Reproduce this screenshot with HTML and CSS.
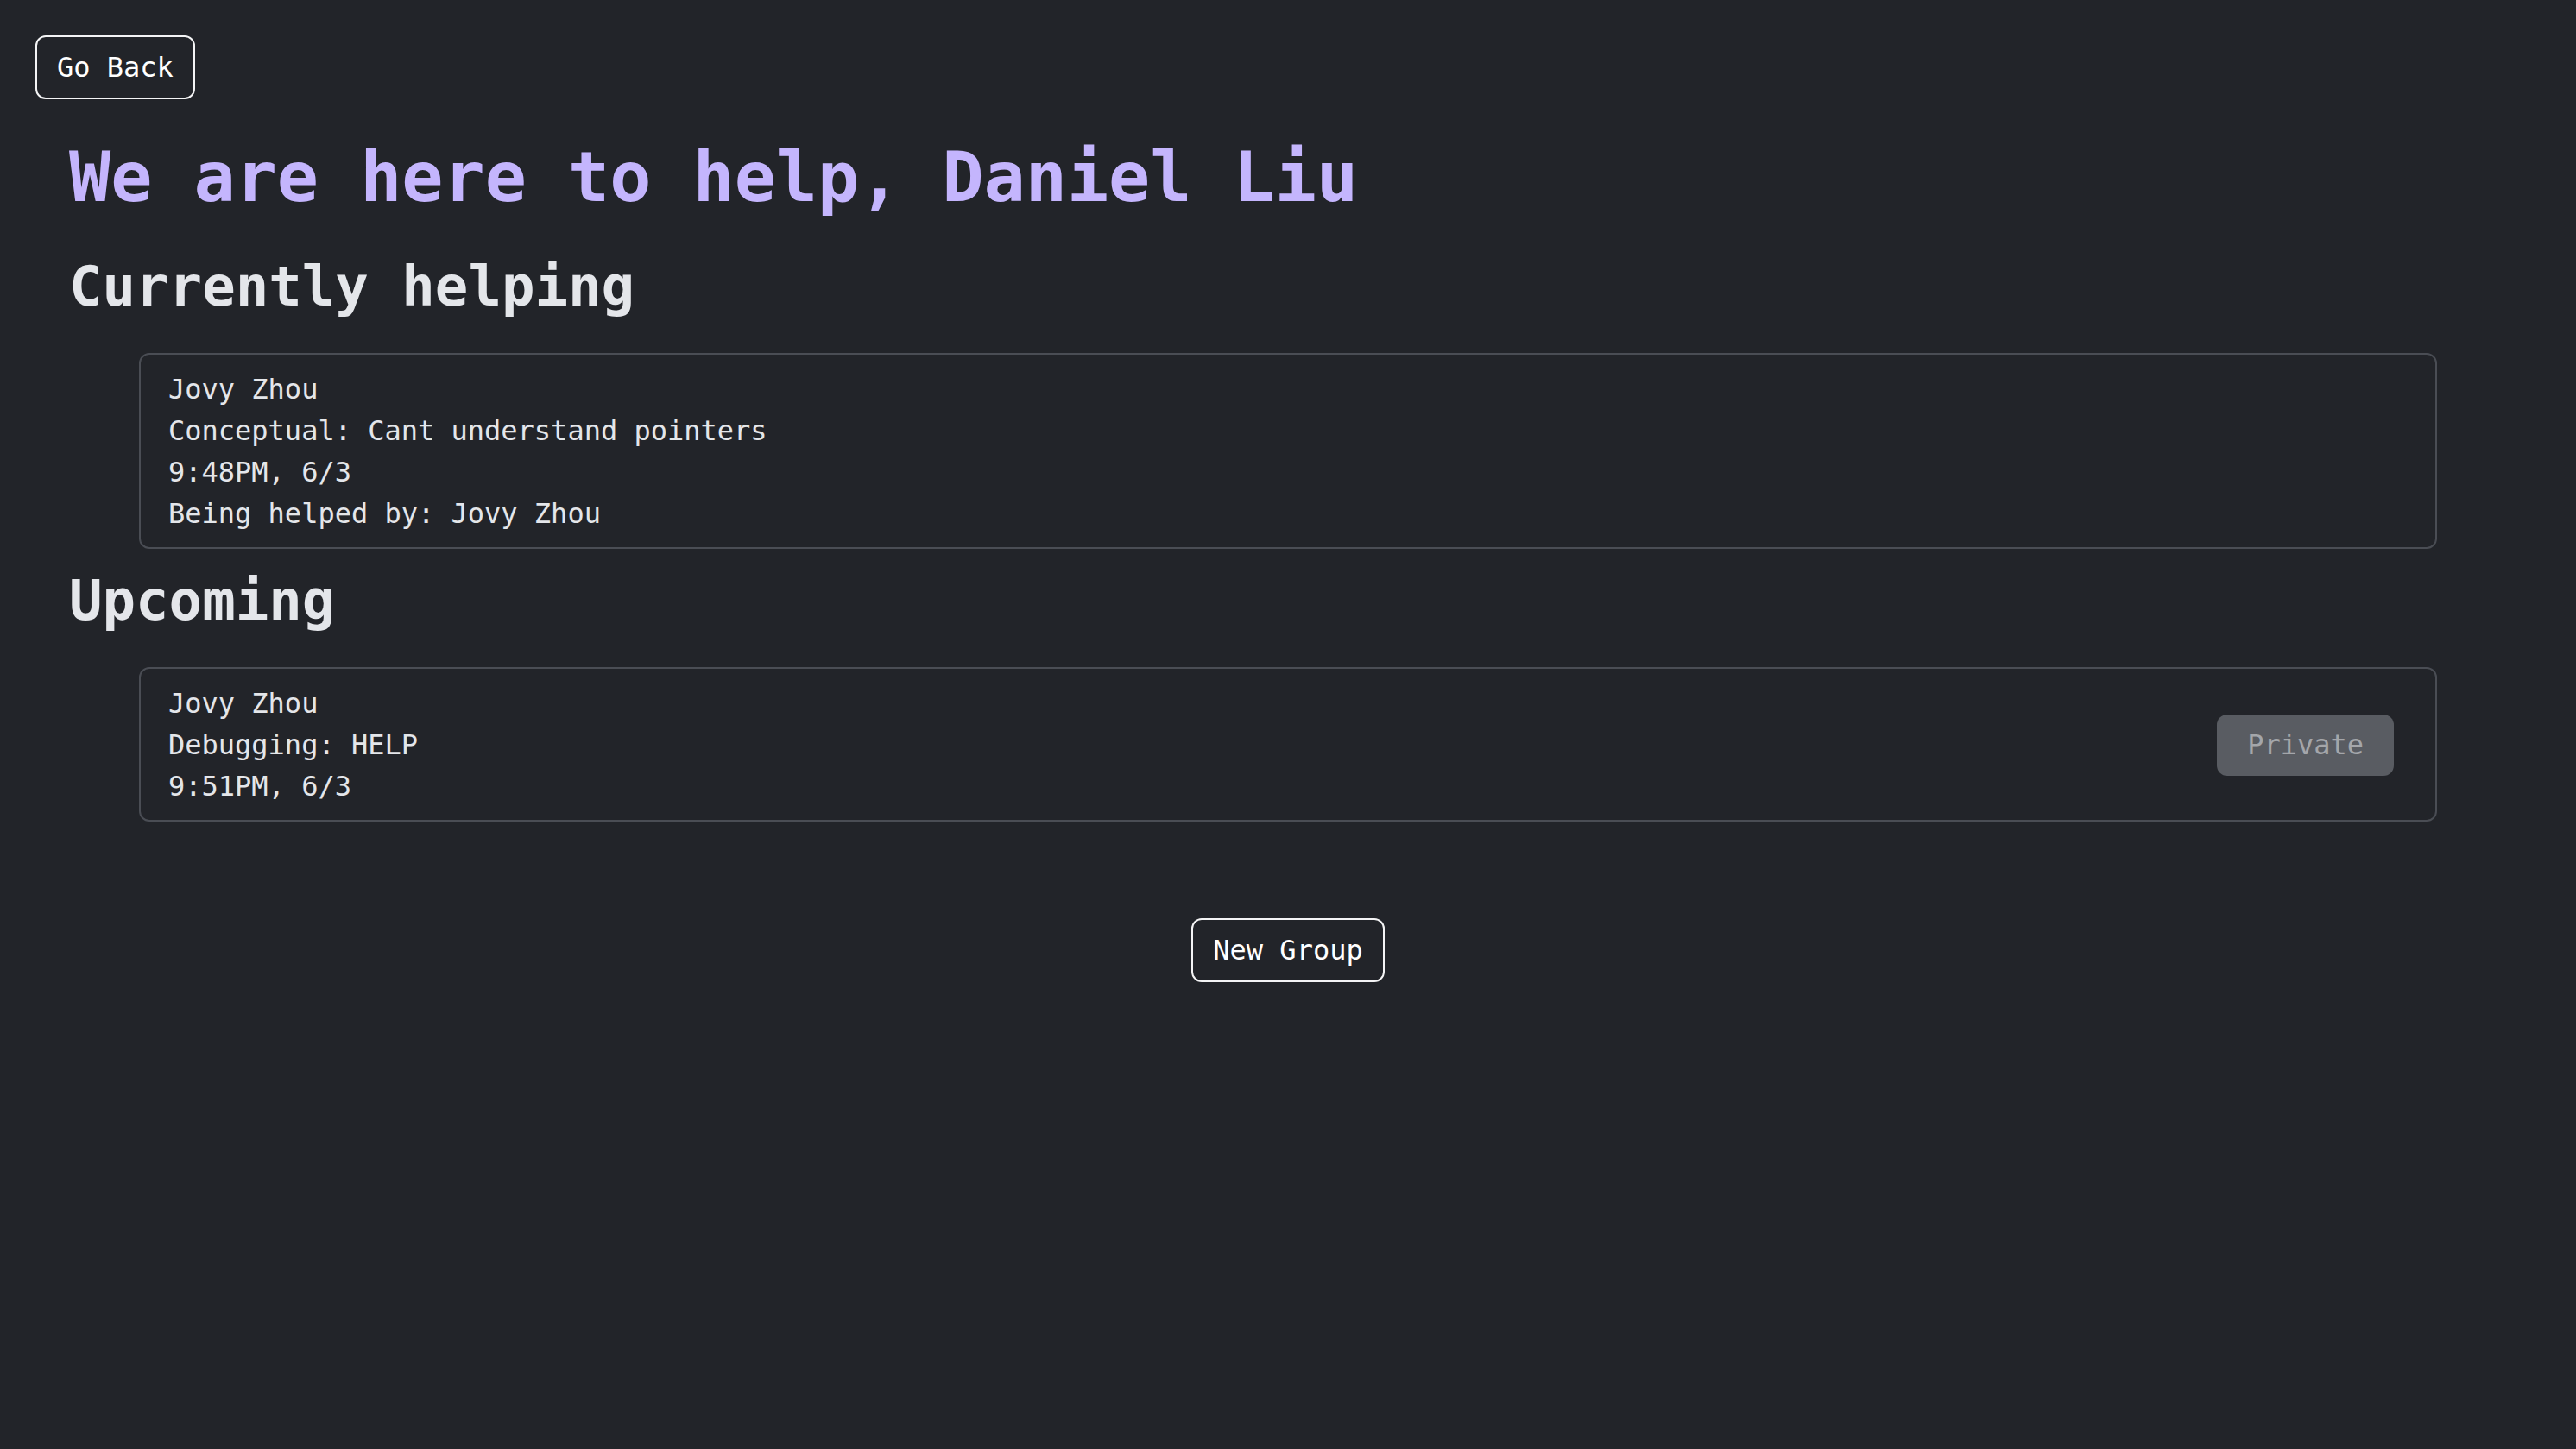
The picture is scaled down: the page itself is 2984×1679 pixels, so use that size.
FILE: index.html
```html
<!DOCTYPE html>
<html lang="en">
<head>
<meta charset="utf-8">
<title>Help Queue</title>
<link rel="stylesheet" href="styles.css">
</head>
<body>
  <header class="topbar">
    <button class="btn-outline">Go Back</button>
  </header>
  <main class="main">
    <h1 class="title">We are here to help, Daniel Liu</h1>

    <h2 class="section-title">Currently helping</h2>
    <ul class="ticket-list">
      <li class="ticket">
        <div class="ticket-info">
          <p class="line">Jovy Zhou</p>
          <p class="line">Conceptual: Cant understand pointers</p>
          <p class="line">9:48PM, 6/3</p>
          <p class="line">Being helped by: Jovy Zhou</p>
        </div>
      </li>
    </ul>

    <h2 class="section-title">Upcoming</h2>
    <ul class="ticket-list">
      <li class="ticket">
        <div class="ticket-info">
          <p class="line">Jovy Zhou</p>
          <p class="line">Debugging: HELP</p>
          <p class="line">9:51PM, 6/3</p>
        </div>
        <button class="btn-private">Private</button>
      </li>
    </ul>

    <div class="actions">
      <button class="btn-outline">New Group</button>
    </div>
  </main>
</body>
</html>
```

FILE: styles.css
```css
html, body {
  margin: 0;
  padding: 0;
  background: #222429;
}

body {
  font-family: "DejaVu Sans Mono", "Liberation Mono", monospace;
  color: #e4e6ea;
  min-height: 1679px;
}

.topbar {
  padding: 41px 0 0 41px;
}

.btn-outline {
  font-family: "DejaVu Sans Mono", "Liberation Mono", monospace;
  font-size: 32px;
  line-height: 40px;
  color: #ffffff;
  background: transparent;
  border: 2px solid #f4f4f5;
  border-radius: 12px;
  padding: 15px 23px;
  cursor: pointer;
}

.main {
  padding: 0 80px;
}

.title {
  font-size: 80px;
  line-height: 96px;
  font-weight: bold;
  color: #c4b5fd;
  margin: 43px 0 40px;
}

.section-title {
  font-size: 64px;
  line-height: 77px;
  font-weight: bold;
  color: #e4e6ea;
  margin: 22px 0 38px;
}

.ticket-list {
  list-style: none;
  margin: 0 81px;
  padding: 0;
}

.ticket {
  display: flex;
  align-items: center;
  justify-content: space-between;
  border: 2px solid #4a4d54;
  border-radius: 12px;
  padding: 16px 32px 15px;
}

.line {
  margin: 0;
  font-size: 32px;
  line-height: 48px;
  color: #e4e6ea;
}

.btn-private {
  font-family: "DejaVu Sans Mono", "Liberation Mono", monospace;
  font-size: 32px;
  line-height: 41px;
  color: #a4a6aa;
  background: #595c62;
  border: none;
  border-radius: 12px;
  padding: 15px 35px;
  margin-right: 16px;
}

.actions {
  display: flex;
  justify-content: center;
  margin-top: 112px;
}
```
